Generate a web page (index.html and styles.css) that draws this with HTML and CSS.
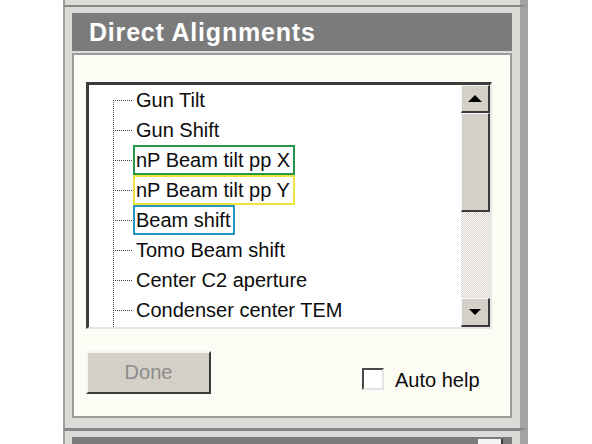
FILE: index.html
```html
<!DOCTYPE html>
<html>
<head>
<meta charset="utf-8">
<title>Direct Alignments</title>
<link rel="stylesheet" href="styles.css">
</head>
<body>
<div class="frame">
  <div class="prev-panel"></div>
  <section class="panel">
    <h1 class="header">Direct Alignments</h1>
    <div class="content">
      <div class="listbox">
        <ul class="tree">
          <li class="row"><span class="conn"></span><span class="label">Gun Tilt</span></li>
          <li class="row"><span class="conn"></span><span class="label">Gun Shift</span></li>
          <li class="row"><span class="conn"></span><span class="label boxed green">nP Beam tilt pp X</span></li>
          <li class="row"><span class="conn"></span><span class="label boxed yellow">nP Beam tilt pp Y</span></li>
          <li class="row"><span class="conn"></span><span class="label boxed blue">Beam shift</span></li>
          <li class="row"><span class="conn"></span><span class="label">Tomo Beam shift</span></li>
          <li class="row"><span class="conn"></span><span class="label">Center C2 aperture</span></li>
          <li class="row"><span class="conn"></span><span class="label">Condenser center TEM</span></li>
        </ul>
        <div class="scrollbar">
          <div class="sb-btn sb-up"><span class="arrow-up"></span></div>
          <div class="sb-thumb"></div>
          <div class="sb-track"></div>
          <div class="sb-btn sb-down"><span class="arrow-down"></span></div>
        </div>
      </div>
      <div class="footer">
        <button class="btn" disabled>Done</button>
        <label class="check"><span class="box"></span><span class="check-text">Auto help</span></label>
      </div>
    </div>
  </section>
  <div class="next-panel"><div class="next-header"><span class="mini-box"></span></div></div>
</div>
</body>
</html>
```

FILE: styles.css
```css
* { box-sizing: border-box; }
html, body {
  margin: 0;
  padding: 0;
  background: #ffffff;
  height: 444px;
  overflow: hidden;
}
body {
  font-family: "Liberation Sans", Arial, sans-serif;
}
.frame {
  margin-left: 63px;
  width: 465px;
}
.prev-panel {
  height: 5px;
  background: #dcdbd7;
  border-left: 2px solid #a0a0a0;
  border-right: 8px solid #a3a3a3;
}
.panel {
  background: #dcdbd7;
  border-left: 2px solid #a0a0a0;
  border-right: 8px solid #a3a3a3;
  border-top: 2px solid #878787;
  padding: 6px 8px 10px 7px;
}
.header {
  margin: 0;
  height: 38px;
  line-height: 38px;
  background: #7b7b7b;
  color: #ffffff;
  font-size: 25px;
  font-weight: bold;
  letter-spacing: 0.8px;
  padding-left: 17px;
}
.content {
  margin-top: 2px;
  background: #fdfcf4;
  border: 2px solid #9c9c9a;
  padding: 27px 18px 22px 12px;
}
.listbox {
  display: flex;
  height: 247px;
  background: #ffffff;
  border-style: solid;
  border-width: 3px 2px 2px 3px;
  border-color: #3c3c3c #e6e6e6 #e6e6e6 #3c3c3c;
}
.tree {
  flex: 1;
  margin: 0;
  padding: 0 0 0 24px;
  list-style: none;
  overflow: hidden;
  background-image: repeating-linear-gradient(to bottom, #444 0 1px, transparent 1px 2px);
  background-size: 1px calc(100% - 15px);
  background-position: 24px 15px;
  background-repeat: no-repeat;
}
.row {
  display: flex;
  align-items: center;
  height: 30px;
}
.conn {
  width: 19px;
  height: 30px;
  margin-right: 4px;
  flex: none;
  background: repeating-linear-gradient(to right, #444 0 1px, transparent 1px 2px) 0 15px / 100% 1px no-repeat;
}
.label {
  font-size: 20px;
  line-height: 30px;
  color: #0c0c0c;
  white-space: nowrap;
}
.boxed {
  line-height: 26px;
  border: 2px solid;
  padding: 0 3px 0 1px;
  margin-left: -3px;
}
.green { border-color: #27954a; }
.yellow { border-color: #eee33c; }
.blue { border-color: #2596c4; }
.scrollbar {
  width: 29px;
  flex: none;
  display: flex;
  flex-direction: column;
}
.sb-btn {
  background: #d4d0c8;
  border-style: solid;
  border-width: 1px 2px 2px 1px;
  border-color: #f6f6f6 #3a3a3a #3a3a3a #f6f6f6;
  display: flex;
  align-items: center;
  justify-content: center;
}
.sb-up { height: 28px; }
.sb-down { height: 29px; }
.sb-thumb {
  height: 99px;
  background: #d4d0c8;
  border-style: solid;
  border-width: 1px 2px 2px 1px;
  border-color: #f6f6f6 #3a3a3a #3a3a3a #f6f6f6;
}
.sb-track {
  height: 86px;
  background: repeating-conic-gradient(#ffffff 0 25%, #d4d0c8 0 50%) 0 0 / 2px 2px;
}
.arrow-up {
  width: 0;
  height: 0;
  border-left: 7px solid transparent;
  border-right: 7px solid transparent;
  border-bottom: 7px solid #000;
}
.arrow-down {
  width: 0;
  height: 0;
  border-left: 6px solid transparent;
  border-right: 6px solid transparent;
  border-top: 6px solid #000;
}
.footer {
  display: flex;
  align-items: flex-start;
  margin-top: 22px;
}
.btn {
  width: 125px;
  height: 43px;
  padding: 0;
  background: #d4d0c8;
  border-style: solid;
  border-width: 2px;
  border-color: #f4f4f4 #3a3a3a #3a3a3a #f4f4f4;
  font-family: "Liberation Sans", Arial, sans-serif;
  font-size: 20px;
  color: #8c8c8c;
}
.check {
  display: flex;
  align-items: center;
  gap: 11px;
  margin-left: 151px;
  margin-top: 16px;
}
.box {
  width: 22px;
  height: 22px;
  background: #ffffff;
  border-style: solid;
  border-width: 2px;
  border-color: #4a4a4a #e4e4e4 #e4e4e4 #4a4a4a;
}
.check-text {
  font-size: 20px;
  color: #0c0c0c;
  line-height: 22px;
  padding-top: 2px;
}
.next-panel {
  height: 16px;
  background: #dcdbd7;
  border-left: 2px solid #a0a0a0;
  border-right: 8px solid #a3a3a3;
  border-top: 3px solid #878787;
  padding: 6px 8px 0 7px;
}
.next-header {
  height: 20px;
  background: #7b7b7b;
  display: flex;
  justify-content: flex-end;
  padding: 2px 9px 0 0;
}
.mini-box {
  width: 25px;
  height: 18px;
  background: #f4f4f4;
  border-right: 2px solid #3a3a3a;
}
```
